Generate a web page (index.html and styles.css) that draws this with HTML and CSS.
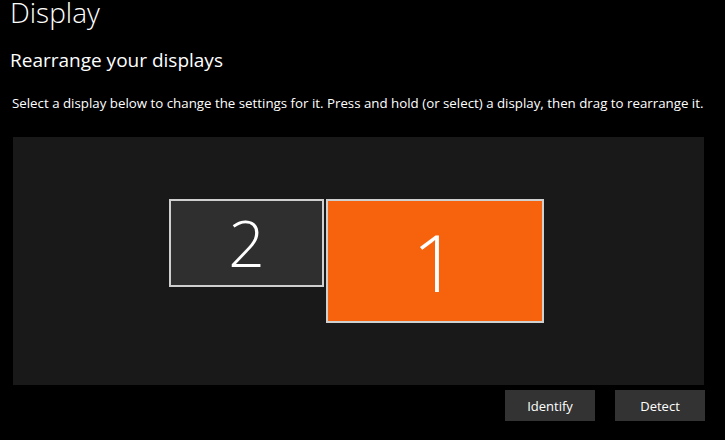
FILE: index.html
```html
<!DOCTYPE html>
<html>
<head>
<meta charset="utf-8">
<link rel="stylesheet" href="styles.css">
</head>
<body>
<div class="page">
  <h1 class="title">Display</h1>
  <h2 class="subtitle">Rearrange your displays</h2>
  <p class="desc">Select a display below to change the settings for it. Press and hold (or select) a display, then drag to rearrange it.</p>
  <div class="canvas">
    <div class="monitor monitor-2"><span class="num">2</span></div>
    <div class="monitor monitor-1"><span class="num">1</span></div>
  </div>
  <div class="actions">
    <button class="btn">Identify</button>
    <button class="btn">Detect</button>
  </div>
</div>
</body>
</html>
```
FILE: styles.css
```css
html, body {
  margin: 0;
  padding: 0;
  background: #000;
}
body {
  font-family: "Open Sans", "Noto Sans", sans-serif;
  color: #fff;
  width: 725px;
  height: 440px;
  overflow: hidden;
}
.page {
  display: flex;
  flex-direction: column;
}
.title {
  margin: 0 0 0 10px;
  font-size: 28px;
  font-weight: 300;
  line-height: 24px;
}
.subtitle {
  margin: 23px 0 0 10px;
  font-size: 19px;
  font-weight: 400;
  line-height: 26px;
}
.desc {
  margin: 21px 0 0 12px;
  font-size: 13.3px;
  line-height: 18px;
  white-space: nowrap;
}
.canvas {
  position: relative;
  margin: 25px 0 0 13px;
  width: 691px;
  height: 248px;
  background: #191919;
}
.monitor {
  position: absolute;
  box-sizing: border-box;
  border: 2px solid #cfcfcf;
  display: flex;
  align-items: center;
  justify-content: center;
  color: #fff;
  font-weight: 300;
}
.monitor-2 {
  left: 156px;
  top: 62px;
  width: 155px;
  height: 88px;
  background: #2f2f2f;
  font-size: 64px;
}
.monitor-1 {
  left: 313px;
  top: 62px;
  width: 218px;
  height: 124px;
  background: #f7630c;
  font-size: 80px;
}
.num {
  line-height: 1;
}
.actions {
  display: flex;
  justify-content: flex-end;
  gap: 20px;
  margin: 5px 20px 0 0;
}
.btn {
  width: 90px;
  height: 31px;
  border: none;
  background: #333;
  color: #fff;
  font-family: "Open Sans", "Noto Sans", sans-serif;
  font-size: 13px;
  padding: 0;
}
```
